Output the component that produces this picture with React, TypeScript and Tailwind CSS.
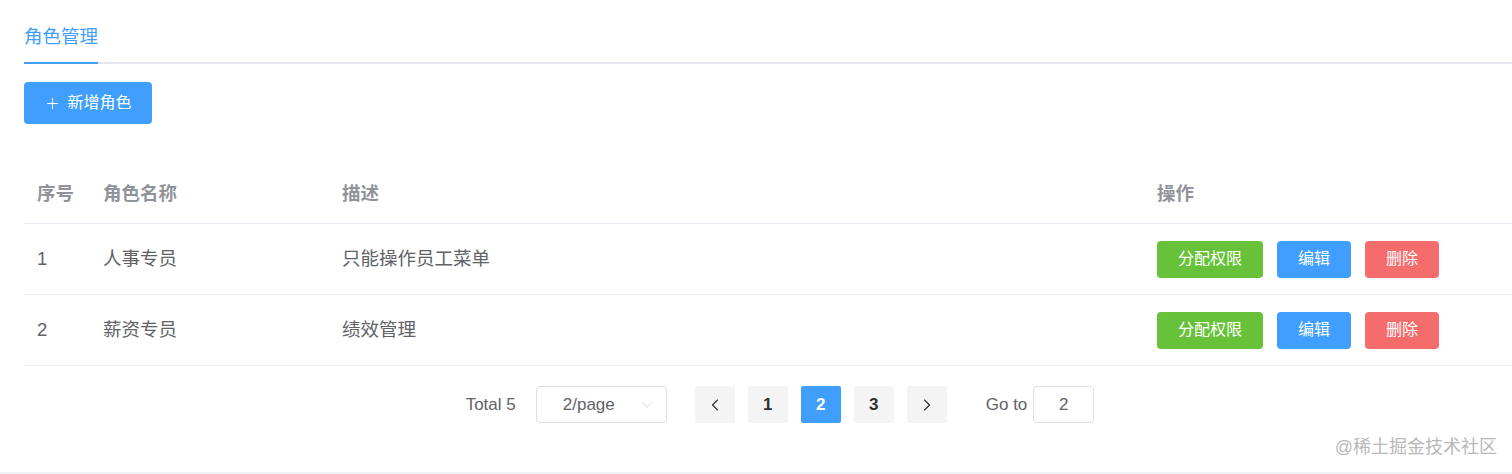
import { Plus, ChevronLeft, ChevronRight, ChevronDown } from 'lucide-react'

const roles = [
  { id: 1, name: '人事专员', description: '只能操作员工菜单' },
  { id: 2, name: '薪资专员', description: '绩效管理' },
]

const font = { fontFamily: '"Liberation Sans", "Noto Sans CJK SC", sans-serif' }

const cols = 'grid grid-cols-[66px_239px_815px_1fr]'

export default function App() {
  return (
    <div className="relative w-[1512px] h-[474px] bg-white overflow-hidden" style={font}>
      <div className="pl-6 h-[64px] flex flex-col">
        <div className="flex-1 flex items-end">
          <div className="pb-[13px] text-[18.5px] leading-[24px] text-[#409eff]">角色管理</div>
        </div>
        <div className="h-[2px] bg-[#e4e7ed] flex">
          <div className="w-[74px] bg-[#409eff]"></div>
        </div>
      </div>

      <div className="pl-6 mt-[18px]">
        <button className="h-[42px] w-[128px] rounded-[4px] bg-[#409eff] text-white text-[16px] flex items-center justify-center gap-[6px]">
          <Plus size={17} strokeWidth={1.5} />
          <span>新增角色</span>
        </button>
      </div>

      <div className="ml-6 mt-[34px]">
        <div className={`${cols} h-[66px] pt-[7px] items-center border-b border-[#ebeef5] text-[18.5px] font-bold text-[#909399]`}>
          <div className="pl-[13px]">序号</div>
          <div className="pl-[13px]">角色名称</div>
          <div className="pl-[13px]">描述</div>
          <div className="pl-[13px]">操作</div>
        </div>
        {roles.map((r) => (
          <div
            key={r.id}
            className={`${cols} h-[71px] items-center border-b border-[#ebeef5] text-[18.5px] text-[#606266]`}
          >
            <div className="pl-[13px]">{r.id}</div>
            <div className="pl-[13px]">{r.name}</div>
            <div className="pl-[13px]">{r.description}</div>
            <div className="pl-[13px] flex gap-[14px] text-[16px] text-white">
              <button className="h-[37px] w-[106px] rounded-[4px] bg-[#67c23a]">分配权限</button>
              <button className="h-[37px] w-[74px] rounded-[4px] bg-[#409eff]">编辑</button>
              <button className="h-[37px] w-[74px] rounded-[4px] bg-[#f56c6c]">删除</button>
            </div>
          </div>
        ))}
      </div>

      <div className="mt-[20px] pl-[48px] flex justify-center items-center text-[17px] text-[#606266]">
        <span className="mr-[20px]">Total 5</span>
        <div className="h-[37px] w-[131px] rounded-[4px] border border-[#dcdfe6] flex items-center pl-[26px] pr-[10px] text-[#606266]">
          <span className="flex-1">2/page</span>
          <ChevronDown size={18} strokeWidth={1} className="text-[#c0c4cc]" />
        </div>
        <div className="ml-[28px] flex gap-[13px] text-[#303133] font-bold">
          <div className="h-[37px] w-[40px] rounded-[2px] bg-[#f4f4f5] flex items-center justify-center">
            <ChevronLeft size={20} strokeWidth={1.4} />
          </div>
          <div className="h-[37px] w-[40px] rounded-[2px] bg-[#f4f4f5] flex items-center justify-center">1</div>
          <div className="h-[37px] w-[40px] rounded-[2px] bg-[#409eff] text-white flex items-center justify-center">2</div>
          <div className="h-[37px] w-[40px] rounded-[2px] bg-[#f4f4f5] flex items-center justify-center">3</div>
          <div className="h-[37px] w-[40px] rounded-[2px] bg-[#f4f4f5] flex items-center justify-center">
            <ChevronRight size={20} strokeWidth={1.4} />
          </div>
        </div>
        <span className="ml-[39px] mr-[6px]">Go to</span>
        <div className="h-[37px] w-[61px] rounded-[4px] border border-[#dcdfe6] flex items-center justify-center text-[#606266]">
          2
        </div>
      </div>

      <div className="absolute left-0 right-0 bottom-0 h-[2px] bg-[#eef0f3]"></div>
      <div className="absolute right-[15px] bottom-[13px] text-[18px] text-[#b8b8b8]">@稀土掘金技术社区</div>
    </div>
  )
}
